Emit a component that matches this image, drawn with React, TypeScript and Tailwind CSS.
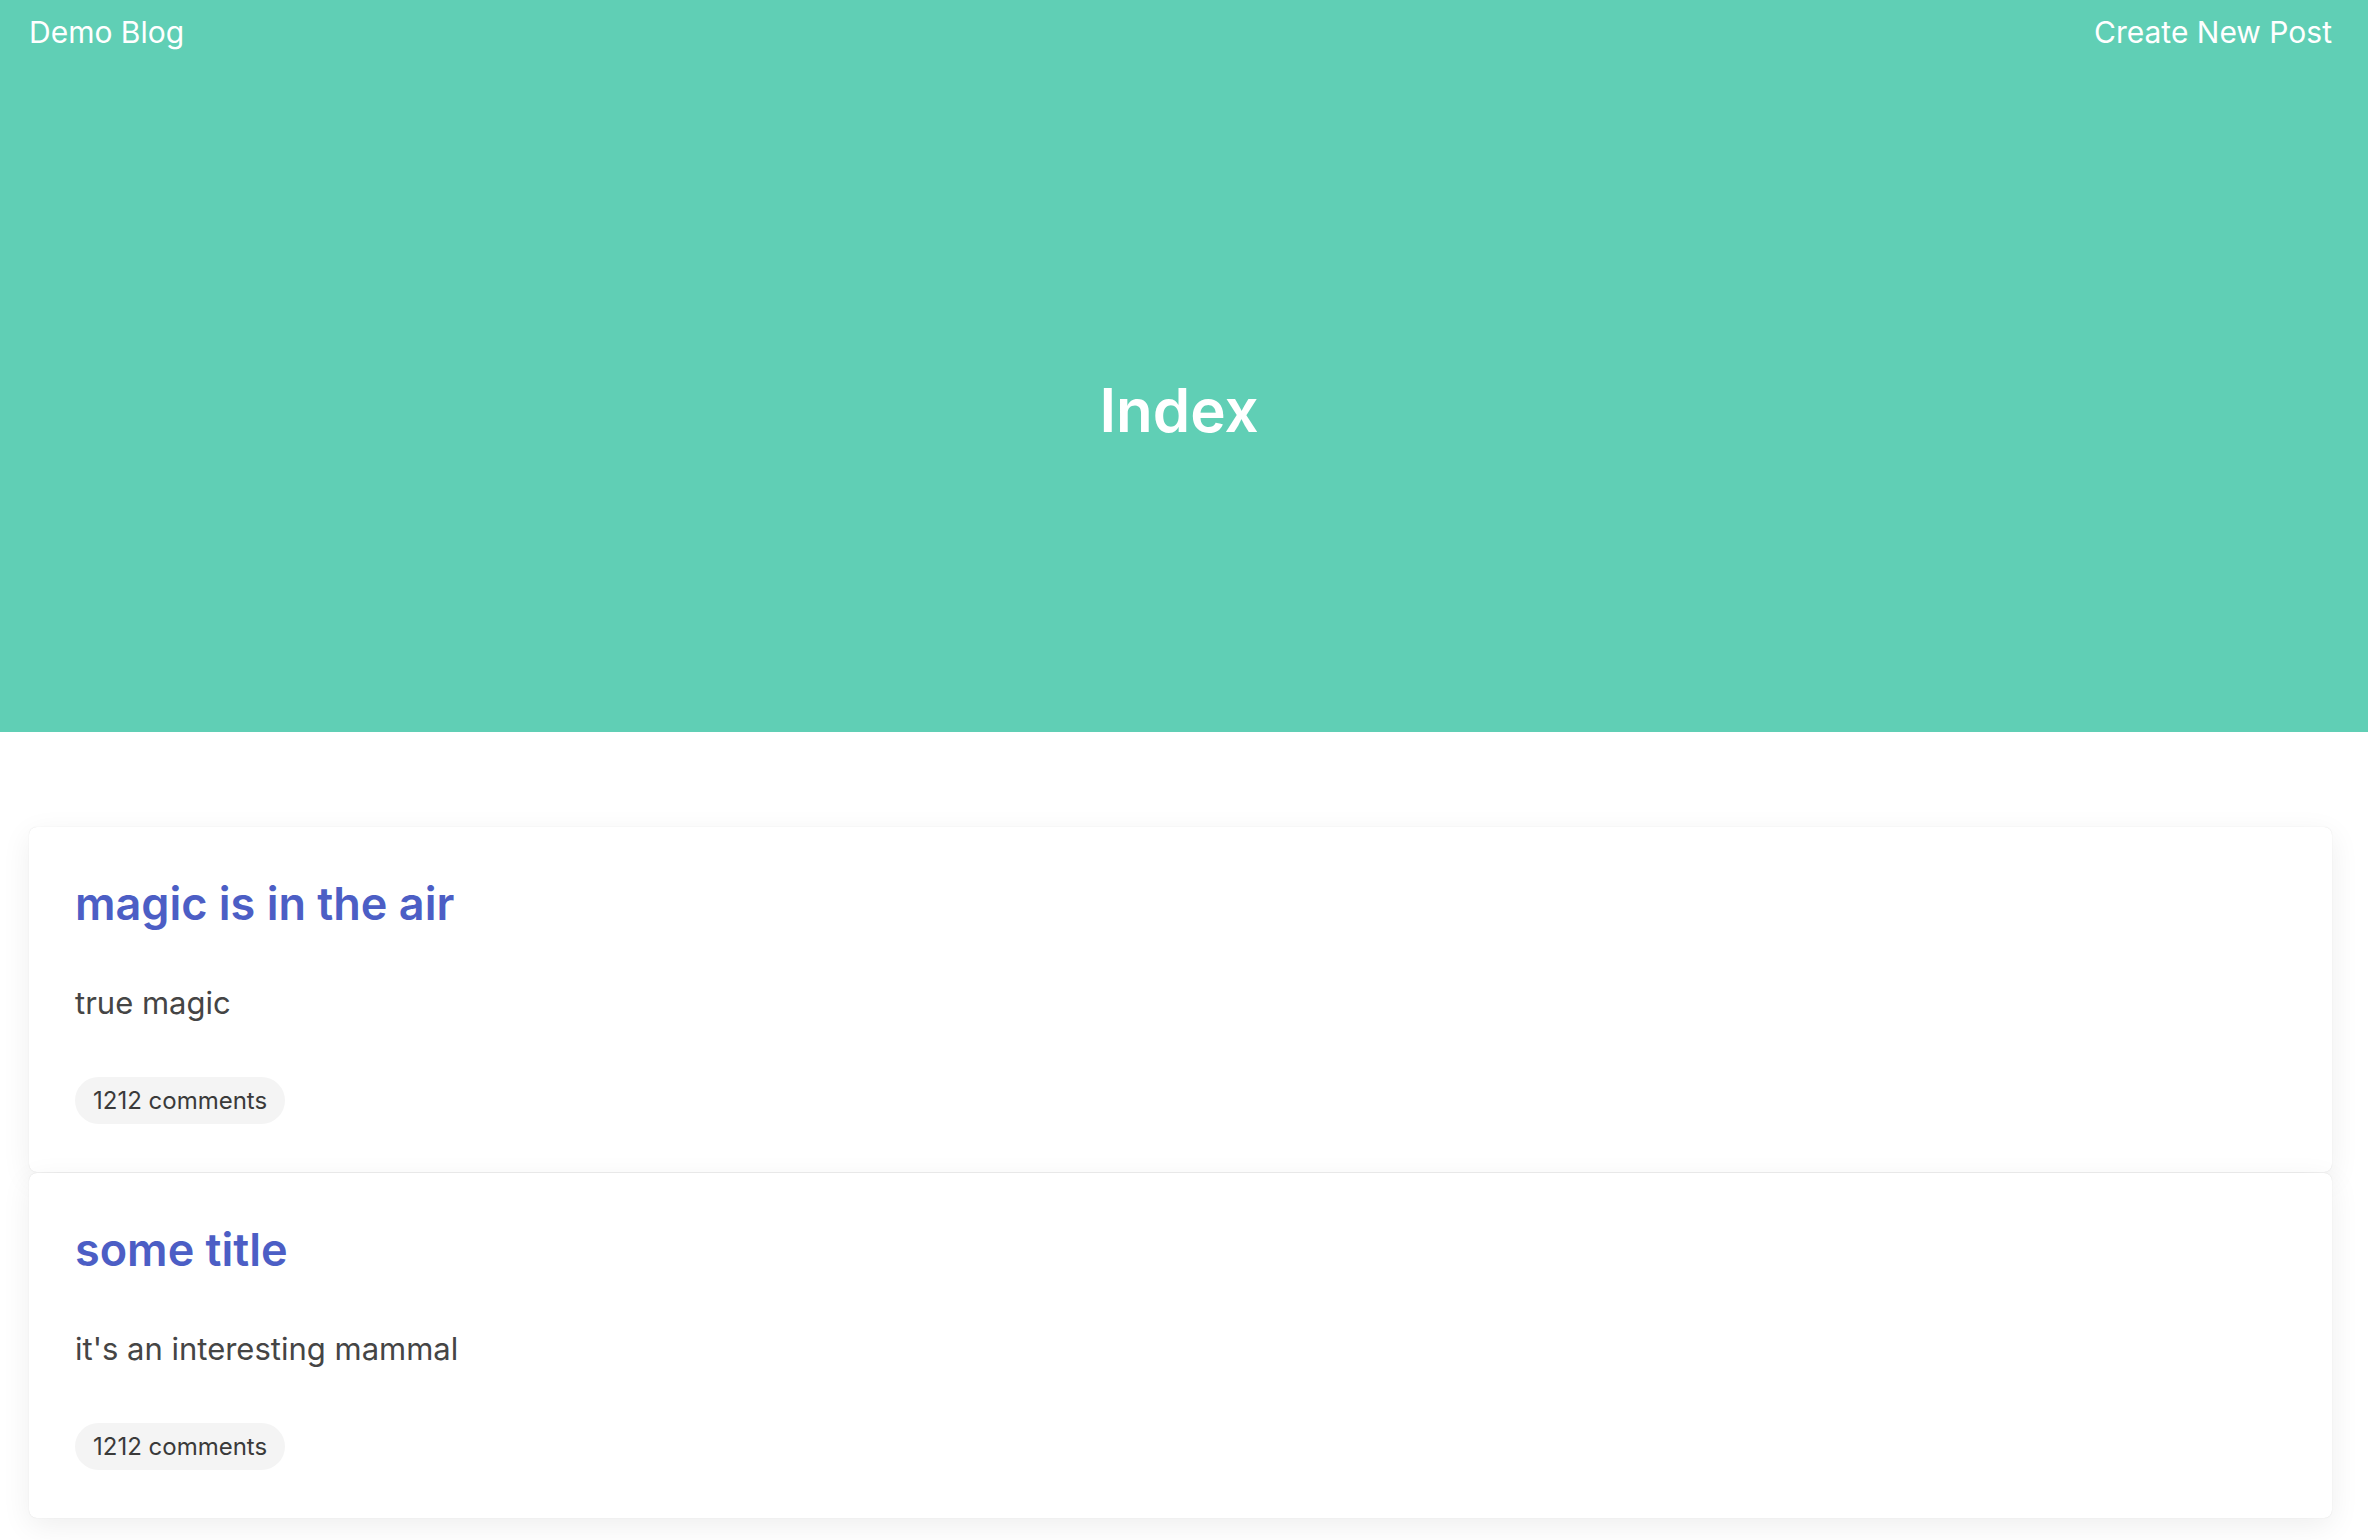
const posts = [
  { title: "magic is in the air", body: "true magic", comments: 1212 },
  { title: "some title", body: "it's an interesting mammal", comments: 1212 },
];

function PostCard({ title, body, comments }: { title: string; body: string; comments: number }) {
  return (
    <article className="rounded-lg bg-white pt-[48px] pb-[48px] pl-[46px] pr-[46px] shadow-[0_0_1px_rgba(0,0,0,0.14),0_8px_30px_rgba(0,0,0,0.07)]">
      <h2 className="text-[45px] leading-[58px] font-semibold text-[#4c5ec5]">{title}</h2>
      <p className="mt-[47px] text-[31px] leading-[45px] text-[#454545]">{body}</p>
      <div className="mt-[52px] flex">
        <span className="inline-flex h-[47px] items-center rounded-full bg-[#f4f4f4] px-[18px] text-[24px] text-[#3a3a3a]">
          {comments} comments
        </span>
      </div>
    </article>
  );
}

export default function App() {
  return (
    <div className="min-h-screen bg-white font-['Inter','Noto_Sans',sans-serif]">
      <header className="h-[732px] bg-[#60cfb5] text-white">
        <nav className="flex justify-between pl-[29px] pr-[36px] pt-[14px] text-[30px] leading-[36px]">
          <a href="#">Demo Blog</a>
          <a href="#">Create New Post</a>
        </nav>
        <h1 className="mt-[323px] pr-[10px] text-center text-[60px] leading-[74px] font-semibold">Index</h1>
      </header>

      <main className="ml-[29px] mr-[36px] mt-[95px] flex flex-col gap-px pb-[23px]">
        {posts.map((p) => (
          <PostCard key={p.title} {...p} />
        ))}
      </main>
    </div>
  );
}
